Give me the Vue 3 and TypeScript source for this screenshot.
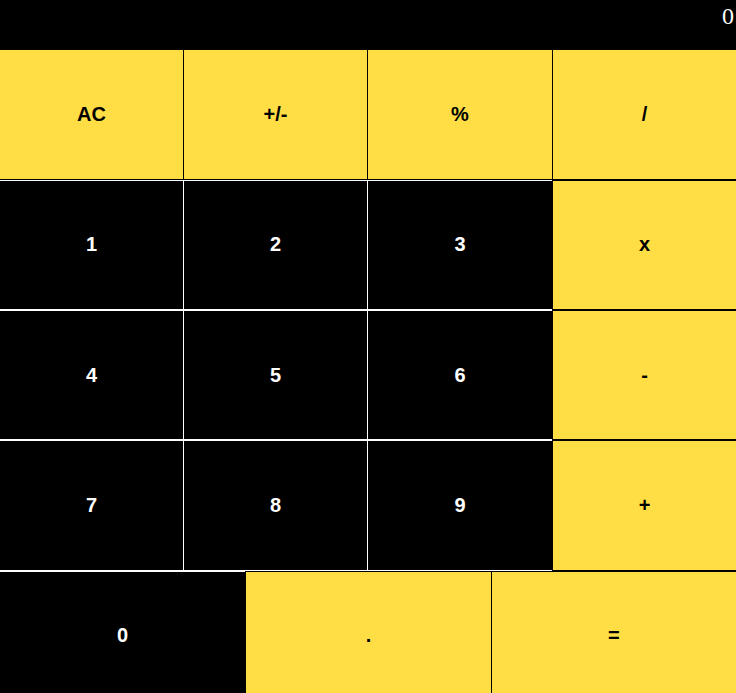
<script setup lang="ts">
import { ref } from 'vue'

type Operator = '/' | 'x' | '-' | '+'

interface Key {
  label: string
  kind: 'digit' | 'action'
}

const digit = (label: string): Key => ({ label, kind: 'digit' })
const action = (label: string): Key => ({ label, kind: 'action' })

const rows: Key[][] = [
  [action('AC'), action('+/-'), action('%'), action('/')],
  [digit('1'), digit('2'), digit('3'), action('x')],
  [digit('4'), digit('5'), digit('6'), action('-')],
  [digit('7'), digit('8'), digit('9'), action('+')],
  [digit('0'), action('.'), action('=')],
]

const display = ref('0')
const stored = ref<number | null>(null)
const pending = ref<Operator | null>(null)
const fresh = ref(true)

function compute(a: number, b: number, op: Operator): number {
  switch (op) {
    case '/':
      return a / b
    case 'x':
      return a * b
    case '-':
      return a - b
    case '+':
      return a + b
  }
}

function resolve(): void {
  if (pending.value !== null && stored.value !== null) {
    display.value = String(compute(stored.value, Number(display.value), pending.value))
  }
}

function press(key: Key): void {
  const label = key.label
  if (key.kind === 'digit') {
    display.value = fresh.value || display.value === '0' ? label : display.value + label
    fresh.value = false
  } else if (label === '.') {
    if (fresh.value) display.value = '0.'
    else if (!display.value.includes('.')) display.value += '.'
    fresh.value = false
  } else if (label === 'AC') {
    display.value = '0'
    stored.value = null
    pending.value = null
    fresh.value = true
  } else if (label === '+/-') {
    display.value = String(-Number(display.value) || 0)
  } else if (label === '%') {
    display.value = String(Number(display.value) / 100)
  } else if (label === '=') {
    resolve()
    stored.value = null
    pending.value = null
    fresh.value = true
  } else {
    if (!fresh.value) resolve()
    stored.value = Number(display.value)
    pending.value = label as Operator
    fresh.value = true
  }
}
</script>

<template>
  <main class="calculator">
    <output class="display">{{ display }}</output>
    <div v-for="(row, index) in rows" :key="index" class="row">
      <button
        v-for="key in row"
        :key="key.label"
        type="button"
        class="key"
        :class="key.kind"
        @click="press(key)"
      >
        {{ key.label }}
      </button>
    </div>
  </main>
</template>

<style>
body {
  margin: 0;
  overflow-x: hidden;
  background: #000;
}
</style>

<style scoped>
.calculator {
  background: #000;
}

.display {
  display: block;
  box-sizing: border-box;
  height: calc(100vh / 14);
  padding: 2px;
  color: #fff;
  font-family: 'Liberation Serif', serif;
  font-size: 24px;
  line-height: 28px;
  text-align: right;
}

.row {
  display: grid;
  grid-auto-flow: column;
  grid-auto-columns: minmax(0, 1fr);
  height: 18.8vh;
}

.key {
  box-sizing: border-box;
  margin: 0;
  padding: 0;
  border-style: solid;
  border-width: 1px 1px 1px 0;
  border-radius: 0;
  font-family: 'Liberation Sans', Arial, sans-serif;
  font-size: 20px;
  font-weight: bold;
  cursor: pointer;
}

.row:first-of-type .key {
  border-top-width: 0;
}

.key:nth-last-child(2) {
  border-right-width: 0;
}

.key:last-child {
  border-right-width: 0;
  border-left-width: 1px;
}

.row:last-child .key {
  border-right-width: 0;
}

.row:last-child .action {
  border-left-width: 1px;
}

.digit {
  border-color: #fff;
  background: #000;
  color: #fff;
}

.action {
  border-color: #000;
  background: #ffdd45;
  color: #000;
}

.key:focus-visible {
  outline: 2px solid #fff;
  outline-offset: -6px;
}

.action:focus-visible {
  outline-color: #000;
}
</style>
